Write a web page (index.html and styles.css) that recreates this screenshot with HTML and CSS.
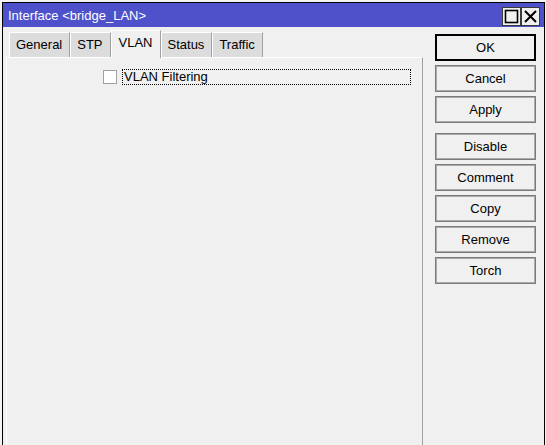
FILE: index.html
```html
<!DOCTYPE html>
<html lang="en">
<head>
<meta charset="UTF-8">
<title>Interface &lt;bridge_LAN&gt;</title>
<link rel="stylesheet" href="styles.css">
</head>
<body>

<div class="window">
    <div class="titlebar">
        <span class="title">Interface &lt;bridge_LAN&gt;</span>
        <div class="title-buttons">
            <span class="tbtn">
                <svg width="15" height="15" viewBox="0 0 15 15"><rect x="1.5" y="1.5" width="12" height="12" fill="none" stroke="#000" stroke-width="1.6"/></svg>
            </span>
            <span class="tbtn">
                <svg width="15" height="15" viewBox="0 0 15 15"><path d="M2 2 L13 13 M13 2 L2 13" stroke="#000" stroke-width="2"/></svg>
            </span>
        </div>
    </div>

    <div class="body">
        <div class="left">
            <div class="tabs">
                <div class="tab">General</div>
                <div class="tab">STP</div>
                <div class="tab active">VLAN</div>
                <div class="tab">Status</div>
                <div class="tab">Traffic</div>
            </div>
            <div class="panel">
                <div class="row">
                    <span class="checkbox"></span>
                    <label class="focus">VLAN Filtering</label>
                </div>
            </div>
        </div>

        <div class="buttons">
            <button class="btn default">OK</button>
            <button class="btn">Cancel</button>
            <button class="btn">Apply</button>
            <button class="btn gap">Disable</button>
            <button class="btn">Comment</button>
            <button class="btn">Copy</button>
            <button class="btn">Remove</button>
            <button class="btn">Torch</button>
        </div>
    </div>
</div>

</body>
</html>
```

FILE: styles.css
```css
/* RouterOS style dialog */
body {
    margin: 0;
    background: #f4f4f4;
    font-family: "Liberation Sans", Arial, sans-serif;
    font-size: 13px;
    color: #000;
    overflow: hidden;
}
.window {
    margin: 2px 0 0 2px;
    width: 541px;
    height: 450px;
    border: 1px solid #000;
    border-bottom: none;
    background: #f0f0f0;
    display: flex;
    flex-direction: column;
}
.titlebar {
    height: 24px;
    background: #4f51cb;
    display: flex;
    align-items: center;
    justify-content: space-between;
    padding: 0 4px 0 5px;
}
.title {
    color: #fff;
    font-size: 13px;
}
.title-buttons {
    display: flex;
    margin-top: 3px;
}
.tbtn {
    width: 17px;
    height: 17px;
    border: 1px solid #3a3a3a;
    background: #f0f0f0;
    display: flex;
    align-items: center;
    justify-content: center;
}
.body {
    flex: 1;
    display: flex;
}
.left {
    width: 417px;
    padding: 2px 0 0 3px;
    display: flex;
    flex-direction: column;
}
.tabs {
    display: flex;
    align-items: flex-end;
    padding-left: 3px;
    height: 28px;
}
.tab {
    height: 24px;
    line-height: 24px;
    padding: 0 7px 0 6px;
    background: #dcdcdc;
    border-left: 1px solid #fff;
    border-right: 1px solid #a0a0a0;
    border-top: 1px solid #fff;
}
.tab.active {
    height: 27px;
    line-height: 24px;
    background: #f0f0f0;
    position: relative;
    top: 1px;
    padding: 0 7px;
}
.panel {
    flex: 1;
    border-top: 1px solid #fff;
    border-left: 1px solid #fff;
    border-right: 1px solid #a0a0a0;
}
.row {
    display: flex;
    align-items: center;
    margin: 11px 0 0 96px;
}
.checkbox {
    width: 12px;
    height: 12px;
    border: 1px solid #a0a0a0;
    background: #fff;
}
.focus {
    margin-left: 5px;
    width: 286px;
    height: 14px;
    line-height: 14px;
    border: 1px dotted #000;
    padding-left: 1px;
}
.buttons {
    display: flex;
    flex-direction: column;
    gap: 4px;
    padding: 7px 0 0 12px;
}
.btn {
    width: 101px;
    height: 27px;
    font-family: inherit;
    font-size: 13px;
    color: #000;
    background: #f0f0f0;
    border: 1px solid #7a7a7a;
    box-shadow: inset 0 0 0 1px #ababab;
    padding: 0;
}
.btn.default {
    border-color: #000;
    box-shadow: inset 0 0 0 1px #000;
}
.btn.gap {
    margin-top: 6px;
}
```
